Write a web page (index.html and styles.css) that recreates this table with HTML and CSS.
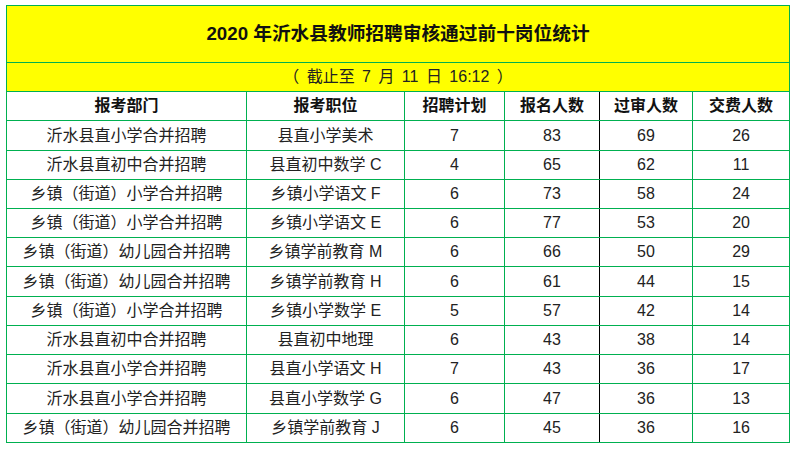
FILE: index.html
```html
<!DOCTYPE html>
<html lang="zh-CN">
<head>
<meta charset="utf-8">
<title>2020年沂水县教师招聘审核通过前十岗位统计</title>
<link rel="stylesheet" href="styles.css">
</head>
<body>
<table class="stats">
  <colgroup>
    <col class="c1"><col class="c2"><col class="c3"><col class="c4"><col class="c5"><col class="c6">
  </colgroup>
  <tr class="title-row"><td colspan="6">2020 年沂水县教师招聘审核通过前十岗位统计</td></tr>
  <tr class="sub-row"><td colspan="6">（ 截止至 7 月 11 日 16:12 ）</td></tr>
  <tr class="head-row">
    <th>报考部门</th><th>报考职位</th><th>招聘计划</th><th class="dark">报名人数</th><th>过审人数</th><th>交费人数</th>
  </tr>
  <tr class="r30"><td>沂水县直小学合并招聘</td><td>县直小学美术</td><td>7</td><td class="dark">83</td><td>69</td><td>26</td></tr>
  <tr class="r29"><td>沂水县直初中合并招聘</td><td>县直初中数学 C</td><td>4</td><td class="dark">65</td><td>62</td><td>11</td></tr>
  <tr class="r29"><td>乡镇（街道）小学合并招聘</td><td>乡镇小学语文 F</td><td>6</td><td class="dark">73</td><td>58</td><td>24</td></tr>
  <tr class="r29"><td>乡镇（街道）小学合并招聘</td><td>乡镇小学语文 E</td><td>6</td><td class="dark">77</td><td>53</td><td>20</td></tr>
  <tr class="r29"><td>乡镇（街道）幼儿园合并招聘</td><td>乡镇学前教育 M</td><td>6</td><td class="dark">66</td><td>50</td><td>29</td></tr>
  <tr class="r30"><td>乡镇（街道）幼儿园合并招聘</td><td>乡镇学前教育 H</td><td>6</td><td class="dark">61</td><td>44</td><td>15</td></tr>
  <tr class="r29"><td>乡镇（街道）小学合并招聘</td><td>乡镇小学数学 E</td><td>5</td><td class="dark">57</td><td>42</td><td>14</td></tr>
  <tr class="r29"><td>沂水县直初中合并招聘</td><td>县直初中地理</td><td>6</td><td class="dark">43</td><td>38</td><td>14</td></tr>
  <tr class="r29"><td>沂水县直小学合并招聘</td><td>县直小学语文 H</td><td>7</td><td class="dark">43</td><td>36</td><td>17</td></tr>
  <tr class="r30"><td>沂水县直小学合并招聘</td><td>县直小学数学 G</td><td>6</td><td class="dark">47</td><td>36</td><td>13</td></tr>
  <tr class="r29"><td>乡镇（街道）幼儿园合并招聘</td><td>乡镇学前教育 J</td><td>6</td><td class="dark">45</td><td>36</td><td>16</td></tr>
</table>
</body>
</html>
```
FILE: styles.css
```css
html, body {
  margin: 0;
  padding: 0;
  background: #ffffff;
}
body {
  padding: 5px 0 0 6px;
  font-family: "Liberation Sans", "Noto Sans CJK SC", sans-serif;
  color: #222222;
}
.stats {
  border-collapse: collapse;
  table-layout: fixed;
  width: 783px;
}
.c1 { width: 240px; }
.c2 { width: 158px; }
.c3 { width: 100px; }
.c4 { width: 95px; }
.c5 { width: 93px; }
.c6 { width: 97px; }
.stats td, .stats th {
  border: 1px solid #00b050;
  padding: 0;
  text-align: center;
  vertical-align: middle;
  font-size: 16px;
  line-height: 20px;
  white-space: nowrap;
}
.stats th {
  font-weight: bold;
  color: #111111;
}
.title-row td {
  height: 56px;
  background: #ffff00;
  font-size: 18.7px;
  font-weight: bold;
  color: #111111;
}
.sub-row td {
  height: 28px;
  background: #ffff00;
  font-size: 16px;
  word-spacing: 3px;
  color: #222222;
}
.head-row th { height: 28px; }
.r30 td { height: 29px; }
.r29 td { height: 28px; }
.stats .dark {
  border-right-color: #000000;
}
```
